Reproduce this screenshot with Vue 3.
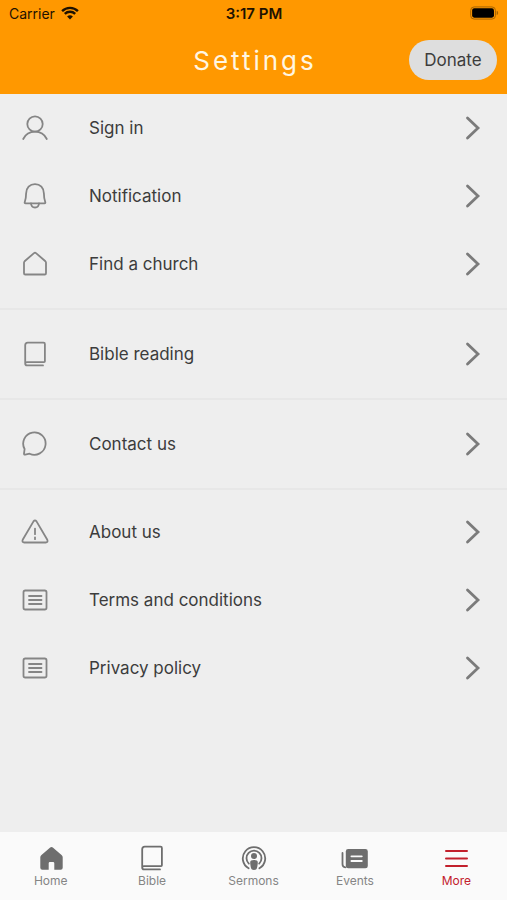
<template>
  <div class="screen">
    <header class="header">
      <div class="status-bar">
        <div class="status-left">
          <span>Carrier</span>
          <svg class="wifi" viewBox="0 0 18 14" aria-hidden="true">
            <path d="M1.1 5.1a11.3 11.3 0 0 1 15.8 0" />
            <path d="M3.8 7.9a7.4 7.4 0 0 1 10.4 0" />
            <path class="wifi-dot" d="M9 13.6l2.9-3a4.1 4.1 0 0 0-5.8 0z" />
          </svg>
        </div>
        <span class="status-time">3:17 PM</span>
        <div class="status-right">
          <svg class="battery" viewBox="0 0 30 14" aria-hidden="true">
            <rect x="0.7" y="0.7" width="25.6" height="12.6" rx="3.6" fill="none" stroke="#a66300" />
            <rect x="2.2" y="2.2" width="22.6" height="9.6" rx="2.2" />
            <path d="M27.6 4.8c2 .5 2 3.9 0 4.4z" fill="#a66300" />
          </svg>
        </div>
      </div>
      <div class="title-bar">
        <h1>Settings</h1>
        <button class="donate-btn" type="button">Donate</button>
      </div>
    </header>

    <main class="content">
      <ul v-for="(group, index) in groups" :key="index" class="group">
        <li v-for="item in group" :key="item.label">
          <a href="#" class="row">
            <svg class="row-icon" viewBox="0 0 28 28" aria-hidden="true">
              <path v-for="d in icons[item.icon]" :key="d" :d="d" />
            </svg>
            <span class="row-label">{{ item.label }}</span>
            <svg class="chevron" viewBox="0 0 16 24" aria-hidden="true">
              <path d="M2.5 2L13 12 2.5 22" />
            </svg>
          </a>
        </li>
      </ul>
    </main>

    <nav class="tab-bar">
      <a href="#" class="tab">
        <svg viewBox="0 0 28 28" aria-hidden="true">
          <path
            class="solid"
            d="M14.5 3q.7 0 1.3.5l9 7.8q.9.8.9 2v10.5q0 2-2 2h-6.4v-6.5q0-1.2-1.2-1.2h-3.2q-1.200 0-1.200 1.200v6.500H5.300q-2 0-2-2V13.300q0-1.200.9-2l9-7.800q.6-.5 1.300-.5z"
          />
        </svg>
        <span>Home</span>
      </a>
      <a href="#" class="tab">
        <svg viewBox="0 0 28 28" aria-hidden="true">
          <path v-for="d in icons.book" :key="d" :d="d" />
        </svg>
        <span>Bible</span>
      </a>
      <a href="#" class="tab">
        <svg viewBox="0 0 28 28" aria-hidden="true">
          <path d="M8.6 24.2a11.2 11.2 0 1 1 10.8 0" />
          <path d="M8.8 19.6a7.500 7.500 0 1 1 10.400 0" />
          <circle class="solid" cx="14" cy="12" r="3" />
          <path
            class="solid"
            d="M14 16c2.500 0 3.800.8 3.800 2.400 0 1.500-.4 4.100-.8 5.700-.3 1.300-1.200 1.900-3 1.900s-2.700-.6-3-1.900c-.4-1.600-.8-4.200-.8-5.700 0-1.600 1.300-2.400 3.800-2.400z"
          />
        </svg>
        <span>Sermons</span>
      </a>
      <a href="#" class="tab">
        <svg viewBox="0 0 28 28" aria-hidden="true">
          <path d="M4.3 23.300q-2.800-.2-2.800-3V9" />
          <rect class="solid" x="4.800" y="5" width="22" height="19.300" rx="2.400" />
          <path class="gap" d="M10.400 12.300h10.400M10.400 17h10.400" />
        </svg>
        <span>Events</span>
      </a>
      <a href="#" class="tab active" aria-current="page">
        <svg viewBox="0 0 28 28" aria-hidden="true">
          <path class="bars" d="M4 7h21M4 14.500h21M4 21.900h21" />
        </svg>
        <span>More</span>
      </a>
    </nav>
  </div>
</template>

<script setup>
const icons = {
  user: [
    'M14 2.3a7.7 7.7 0 1 1 0 15.4a7.7 7.7 0 1 1 0-15.4z',
    'M2.2 25c2.3-4.6 6.7-7.3 11.8-7.3s9.5 2.7 11.8 7.3'
  ],
  bell: [
    'M4.5 21.3c-.8 0-1-.4-.8-1 .7-2 1.4-4.5 1.4-8.8 0-5.6 3.7-9.4 8.9-9.4s8.900 3.800 8.900 9.400c0 4.300.7 6.800 1.400 8.800.2.6 0 1-.8 1z',
    'M10 21.3c.1 2.6 1.7 4.2 4 4.2s3.9-1.6 4-4.2'
  ],
  home: ['M3 12.7q0-.8.6-1.4L13 3.1q1-.8 2 0l9.4 8.2q.6.6.6 1.4v10.5q0 1.3-1.3 1.3H4.3q-1.3 0-1.3-1.3z'],
  book: [
    'M4.2 23.3V5.2q0-2.5 2.5-2.5h15.9q1.3 0 1.3 1.3v17.3q0 .8-.8.8H6q-1.8 0-1.8 1.6t1.8 1.7h16'
  ],
  chat: ['M3.6 19A11.2 11.2 0 1 1 8.600 23.700l-4.400.9q-1.300.2-1.200-1z'],
  alert: [
    'M12.5 3.4q1.5-2 3 0l10.8 18.3q1 2.6-1.7 2.8H3.4q-2.7-.2-1.7-2.8z',
    'M14 10.6v5.6',
    'M14 19.4v1.8'
  ],
  list: [
    'M4.3 4.5h19.4q1.8 0 1.8 1.8v15.4q0 1.8-1.8 1.8H4.3q-1.8 0-1.8-1.8V6.3q0-1.8 1.8-1.8z',
    'M8 10h12.5M8 14h12.5M8 18h12.5'
  ]
}

const groups = [
  [
    { label: 'Sign in', icon: 'user' },
    { label: 'Notification', icon: 'bell' },
    { label: 'Find a church', icon: 'home' }
  ],
  [{ label: 'Bible reading', icon: 'book' }],
  [{ label: 'Contact us', icon: 'chat' }],
  [
    { label: 'About us', icon: 'alert' },
    { label: 'Terms and conditions', icon: 'list' },
    { label: 'Privacy policy', icon: 'list' }
  ]
]
</script>

<style>
body {
  background: #eeeeee;
}
</style>

<style scoped>
.screen {
  display: flex;
  flex-direction: column;
  min-height: 100vh;
  background: #eeeeee;
  color: #3c3c3c;
  font-family: Inter, 'Liberation Sans', sans-serif;
}

a {
  color: inherit;
  text-decoration: none;
}

/* Header */
.header {
  background: #ff9800;
}

.status-bar {
  display: grid;
  grid-template-columns: 1fr auto 1fr;
  align-items: center;
  height: 26px;
  padding: 0 8px 0 9px;
  color: #1e1200;
  font-size: 14px;
}

.status-left {
  display: flex;
  align-items: center;
  gap: 6px;
}

.status-time {
  font-size: 15px;
  font-weight: 600;
}

.status-right {
  display: flex;
  justify-content: flex-end;
}

.wifi {
  width: 18px;
  height: 14px;
  fill: none;
  stroke: #1e1200;
  stroke-width: 2.4;
}

.wifi-dot {
  fill: #1e1200;
  stroke: none;
}

.battery {
  width: 29px;
  height: 14px;
  fill: #000000;
}

.title-bar {
  display: grid;
  grid-template-columns: 1fr auto 1fr;
  align-items: center;
  height: 68px;
  padding: 0 10px;
}

h1 {
  grid-column: 2;
  margin: 0;
  padding-left: 3px;
  color: #fff6e2;
  font-size: 26px;
  font-weight: 400;
  letter-spacing: 3px;
}

.donate-btn {
  justify-self: end;
  min-width: 88px;
  height: 40px;
  padding: 0 15px;
  border: none;
  border-radius: 20px;
  background: #dedede;
  color: #3c3c3c;
  font-family: inherit;
  font-size: 17px;
  cursor: pointer;
}

/* Settings list */
.content {
  flex: 1;
}

.group {
  margin: 0;
  padding: 10px 0;
  border-bottom: 2px solid #e7e7e7;
  list-style: none;
}

.group:first-child {
  padding-top: 0;
}

.group:last-child {
  padding-top: 8px;
  border-bottom: none;
}

.row {
  display: flex;
  align-items: center;
  height: 68px;
  padding: 0 26px 0 21px;
}

.row-icon {
  width: 28px;
  height: 28px;
  margin-right: 40px;
  fill: none;
  stroke: #858585;
  stroke-width: 1.8;
  stroke-linecap: round;
  stroke-linejoin: round;
}

.row-label {
  flex: 1;
  font-size: 17px;
}

.chevron {
  width: 16px;
  height: 24px;
  fill: none;
  stroke: #7b7b7b;
  stroke-width: 2.8;
  stroke-linecap: round;
}

/* Bottom tabs */
.tab-bar {
  display: flex;
  height: 68px;
  background: #fafafa;
}

.tab {
  display: flex;
  flex: 1;
  flex-direction: column;
  align-items: center;
  gap: 1px;
  padding-top: 12px;
  color: #858585;
  font-size: 12px;
  line-height: 16px;
}

.tab svg {
  width: 28px;
  height: 28px;
  fill: none;
  stroke: #6e6e6e;
  stroke-width: 1.8;
  stroke-linecap: round;
  stroke-linejoin: round;
}

.tab .solid {
  fill: #6e6e6e;
  stroke: none;
}

.tab .gap {
  stroke: #fafafa;
  stroke-width: 1.8;
}

.tab.active {
  color: #c2202c;
}

.tab .bars {
  stroke: #c2202c;
  stroke-width: 2;
}
</style>
